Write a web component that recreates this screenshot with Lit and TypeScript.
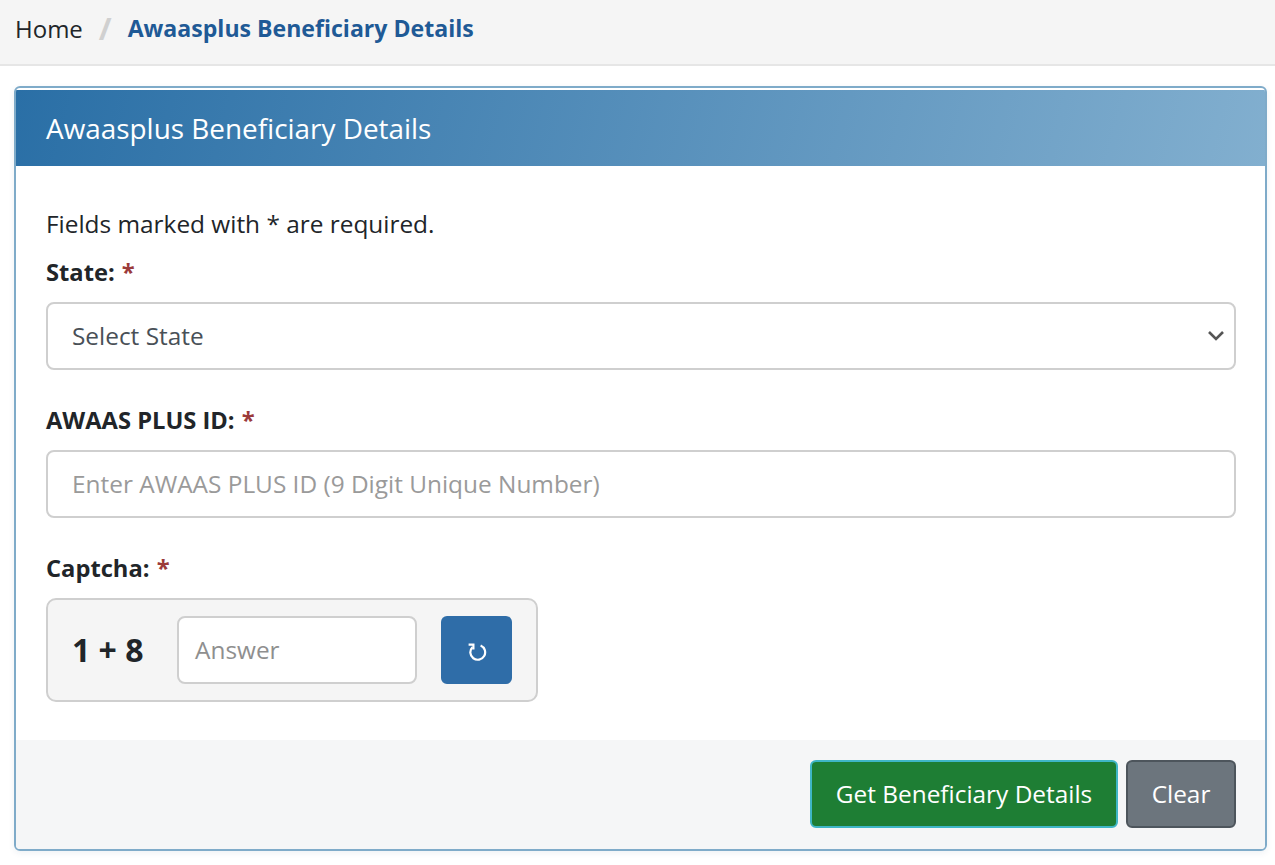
import { LitElement, html, css } from "lit";
import { customElement } from "lit/decorators.js";

@customElement("app-root")
export class AppRoot extends LitElement {
  static styles = css`
    :host { display: block; width: 1275px; height: 865px; overflow: hidden; background: #fff; font-family: "Open Sans", "Noto Sans", sans-serif; color: #212529; font-size: 24.4px; }
    * { box-sizing: border-box; }
    .crumbs { height: 66px; display: flex; align-items: center; padding: 0 15px 8px; background: #f5f5f5; border-bottom: 2px solid #e6e6e6; font-size: 24px; }
    .home { color: #212529; }
    .sep { color: #d0d0d0; margin: 0 16px 0 16px; font-size: 31px; line-height: 30px; font-weight: 700; }
    .current { color: #1f5a96; font-weight: 700; font-size: 23.1px; }
    .main { padding: 20px 8px 0 14px; }
    .card { height: 765px; border: 2px solid #7fabc9; border-radius: 6px; overflow: hidden; display: flex; flex-direction: column; box-shadow: 0 2px 6px rgba(40, 80, 120, 0.08); }
    .head { height: 76px; flex: none; margin-top: 1.5px; display: flex; align-items: center; padding: 1px 30px 0; color: #fff; font-size: 27.9px; background: linear-gradient(105deg, #2a6fa6, #82afcf); }
    .body { flex: 1; min-height: 0; padding: 41.5px 29px 0 30px; }
    .note { line-height: 34px; }
    label { display: block; font-weight: 700; line-height: 34px; font-size: 23.7px; margin-bottom: 13px; }
    .req { color: #9b3a3a; margin-left: 1px; }
    .note + label { margin-top: 14px; }
    .field { height: 68px; margin-bottom: 33px; border: 2px solid #cfcfcf; border-radius: 8px; display: flex; align-items: center; justify-content: space-between; padding: 0 9px 2px 24px; color: #495057; }
    .chev { margin-top: 2px; }
    .ph { color: #9a9a9a; }
    .captcha { width: 492px; height: 104px; border: 2px solid #cfcfcf; border-radius: 10px; background: #f5f5f5; display: flex; align-items: center; padding: 0 24px; }
    .sum { width: 105px; font-size: 32px; font-weight: 700; padding-bottom: 2px; }
    .ans { width: 240px; height: 68px; border: 2px solid #cfcfcf; border-radius: 8px; background: #fff; display: flex; align-items: center; padding: 0 16px 2px; color: #8f8f8f; }
    .refresh { width: 71px; height: 68px; margin-left: 24px; border-radius: 6px; background: #2f6da8; display: flex; align-items: center; justify-content: center; padding: 3px 0 0 2px; }
    .foot { height: 109px; flex: none; background: #f5f6f7; display: flex; justify-content: flex-end; align-items: flex-start; gap: 8px; padding: 20px 29px 0 0; }
    .btn { height: 68px; border-radius: 6px; display: flex; align-items: center; justify-content: center; color: #fff; padding-bottom: 1px; }
    .go { width: 308px; background: #1e7e34; border: 2px solid #3fb6c6; }
    .clear { width: 110px; background: #6c757d; border: 2px solid #4d555c; }
  `;
  render() {
    return html`
      <nav class="crumbs"><span class="home">Home</span><span class="sep">/</span><span class="current">Awaasplus Beneficiary Details</span></nav>
      <div class="main">
        <section class="card">
          <header class="head">Awaasplus Beneficiary Details</header>
          <div class="body">
            <div class="note">Fields marked with * are required.</div>
            <label>State: <span class="req">*</span></label>
            <div class="field"><span>Select State</span>
              <svg class="chev" width="18" height="12" viewBox="0 0 18 12" fill="none" stroke="#555" stroke-width="2.6"><path d="M2 2l7 7 7-7"/></svg>
            </div>
            <label>AWAAS PLUS ID: <span class="req">*</span></label>
            <div class="field"><span class="ph">Enter AWAAS PLUS ID (9 Digit Unique Number)</span></div>
            <label>Captcha: <span class="req">*</span></label>
            <div class="captcha">
              <div class="sum">1 + 8</div>
              <div class="ans">Answer</div>
              <div class="refresh">
                <svg width="20" height="18" viewBox="0 0 20 18" fill="none" stroke="#fff" stroke-width="2.2">
                  <path d="M12.6 2.5A7.4 7.4 0 1 1 4.4 4.2"/>
                  <path d="M0.6 1.6H5.4V6.4"/>
                </svg>
              </div>
            </div>
          </div>
          <footer class="foot">
            <div class="btn go">Get Beneficiary Details</div>
            <div class="btn clear">Clear</div>
          </footer>
        </section>
      </div>
    `;
  }
}
